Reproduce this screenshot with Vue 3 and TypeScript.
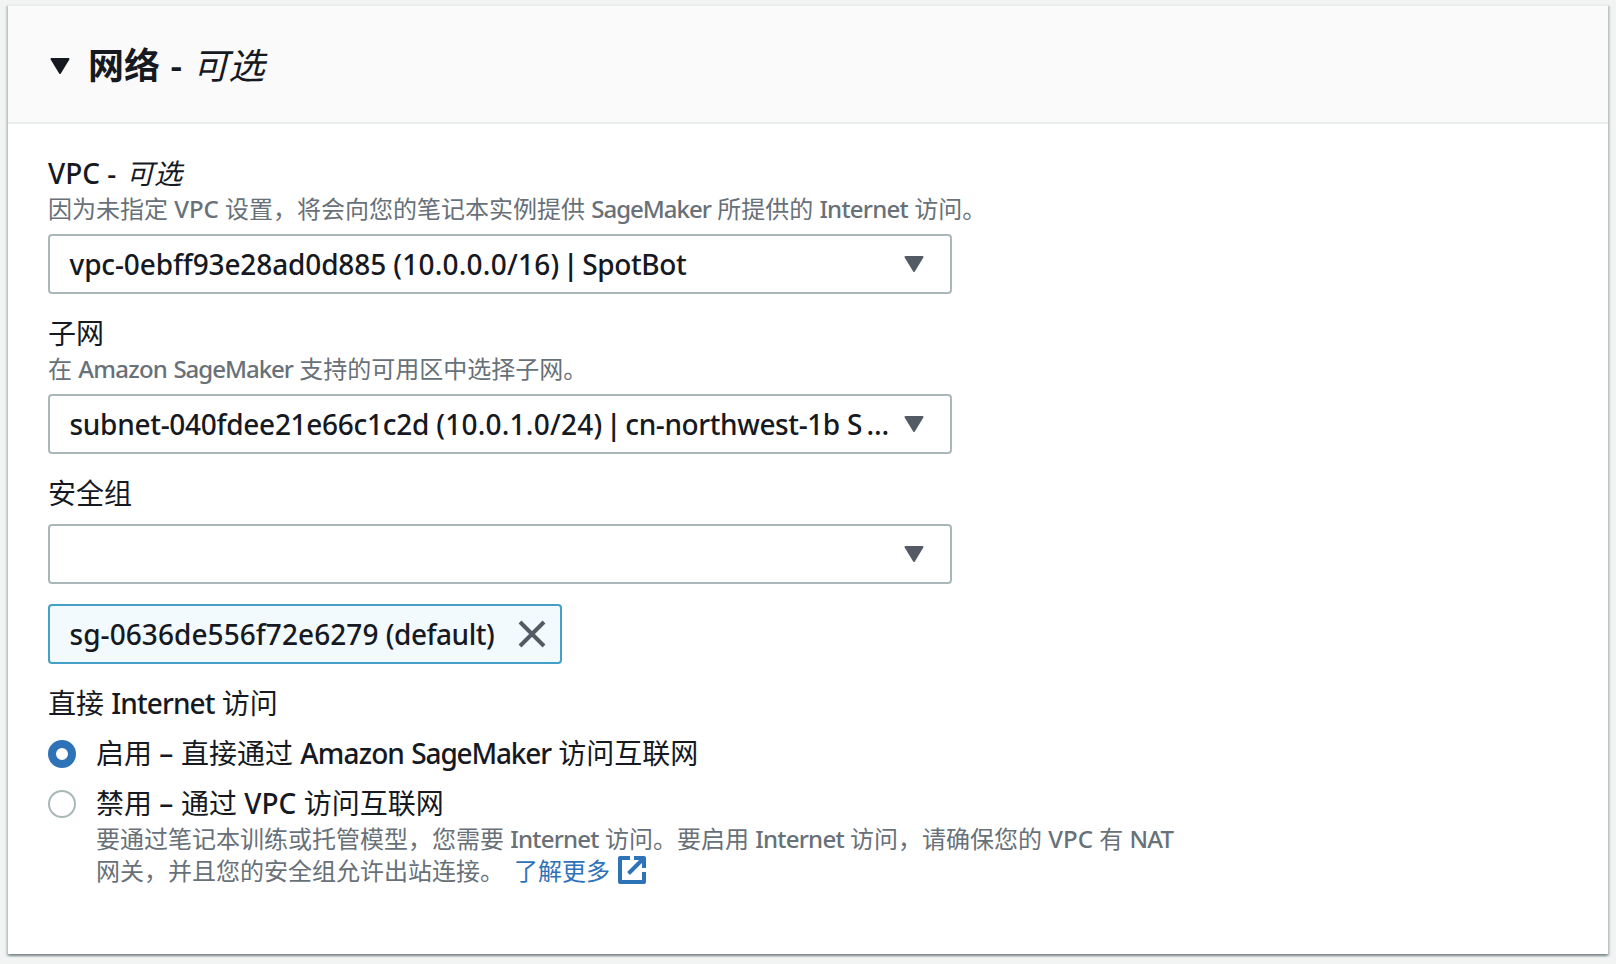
<script setup lang="ts">
import { ref } from 'vue'

interface Run {
  text: string
  latin: boolean
  tracking: string
}

// Advance width of each Latin word, in px at a 28px font size.
const advances: Record<string, number> = {
  VPC: 52,
  SageMaker: 139.5,
  Amazon: 103.7,
  Internet: 103.3,
  NAT: 51,
  '-': 11.3,
  '–': 14.5,
  'vpc-0ebff93e28ad0d885': 316.5,
  '(10.0.0.0/16)': 166,
  SpotBot: 104,
  'subnet-040fdee21e66c1c2d': 359.5,
  '(10.0.1.0/24)': 166,
  'cn-northwest-1b': 214.5,
  'S…': 46,
  'sg-0636de556f72e6279': 309,
  '(default)': 108.5,
}

const ctx = document.createElement('canvas').getContext('2d')!
ctx.font = '500 28px "Noto Sans"'

function runs(text: string): Run[] {
  return text
    .split(/([!-~–…]+)/)
    .filter((part) => part.length > 0)
    .map((part) => {
      const target = advances[part]
      if (target === undefined) return { text: part, latin: false, tracking: 'normal' }
      const spacing = (target - ctx.measureText(part).width) / part.length / 28
      return { text: part, latin: true, tracking: `${spacing.toFixed(4)}em` }
    })
}

const fields = [
  {
    label: 'VPC - ',
    optional: '可选',
    hint: '因为未指定 VPC 设置，将会向您的笔记本实例提供 SageMaker 所提供的 Internet 访问。',
    value: ['vpc-0ebff93e28ad0d885 (10.0.0.0/16)', 'SpotBot'],
  },
  {
    label: '子网',
    optional: '',
    hint: '在 Amazon SageMaker 支持的可用区中选择子网。',
    value: ['subnet-040fdee21e66c1c2d (10.0.1.0/24)', 'cn-northwest-1b S…'],
  },
  { label: '安全组', optional: '', hint: '', value: [] as string[] },
]

const access = ref('on')
const expanded = ref(true)
const groups = ref(['sg-0636de556f72e6279 (default)'])
</script>

<template>
  <section class="card" lang="zh-CN">
    <header class="head" @click="expanded = !expanded">
      <svg class="caret" viewBox="0 0 20 16"><path d="M1.500 1h17L10 15z" /></svg>
      <h2><b>网络</b><span class="dash">-</span><i>可选</i></h2>
    </header>

    <div v-if="expanded" class="body">
      <div v-for="f in fields" :key="f.label" class="field">
        <div class="label">
          <span v-for="(r, i) in runs(f.label)" :key="i" :class="{ latin: r.latin }" :style="{ letterSpacing: r.tracking }">{{ r.text }}</span><i v-if="f.optional">{{ f.optional }}</i>
        </div>
        <div v-if="f.hint" class="hint">
          <span v-for="(r, i) in runs(f.hint)" :key="i" :class="{ latin: r.latin }" :style="{ letterSpacing: r.tracking }">{{ r.text }}</span>
        </div>
        <div class="select" :class="{ plain: !f.hint }">
          <div class="value">
            <template v-for="(part, p) in f.value" :key="p">
              <span v-if="p > 0" class="bar">|</span>
              <span v-for="(r, i) in runs(part)" :key="i" :style="{ letterSpacing: r.tracking }">{{ r.text }}</span>
            </template>
          </div>
          <svg class="caret" viewBox="0 0 20 16"><path d="M1.500 1h17L10 15z" /></svg>
        </div>
      </div>

      <div v-for="g in groups" :key="g" class="tag">
        <div class="value">
          <span v-for="(r, i) in runs(g)" :key="i" :style="{ letterSpacing: r.tracking }">{{ r.text }}</span>
        </div>
        <svg class="close" viewBox="0 0 28 28" @click="groups = []"><path d="M2 2l24 24M26 2L2 26" /></svg>
      </div>

      <div class="label">
        <span v-for="(r, i) in runs('直接 Internet 访问')" :key="i" :class="{ latin: r.latin }" :style="{ letterSpacing: r.tracking }">{{ r.text }}</span>
      </div>
      <div class="options">
        <div class="option" @click="access = 'on'">
          <span class="radio" :class="{ on: access === 'on' }"></span>
          <div class="label">
            <span v-for="(r, i) in runs('启用 – 直接通过 Amazon SageMaker 访问互联网')" :key="i" :class="{ latin: r.latin }" :style="{ letterSpacing: r.tracking }">{{ r.text }}</span>
          </div>
        </div>
        <div class="option" @click="access = 'off'">
          <span class="radio" :class="{ on: access === 'off' }"></span>
          <div>
            <div class="label">
              <span v-for="(r, i) in runs('禁用 – 通过 VPC 访问互联网')" :key="i" :class="{ latin: r.latin }" :style="{ letterSpacing: r.tracking }">{{ r.text }}</span>
            </div>
            <div class="hint">
              <span v-for="(r, i) in runs('要通过笔记本训练或托管模型，您需要 Internet 访问。要启用 Internet 访问，请确保您的 VPC 有 NAT')" :key="i" :class="{ latin: r.latin }" :style="{ letterSpacing: r.tracking }">{{ r.text }}</span>
            </div>
            <div class="hint">
              <span>网关，并且您的安全组允许出站连接。</span>
              <a class="link">了解更多<svg class="external" viewBox="0 0 28 28"><path d="M12 2H2v24h24V16" /><path d="M16 2h10v10M25 3L10.500 17.500" /></svg></a>
            </div>
          </div>
        </div>
      </div>
    </div>
  </section>
</template>

<style>
body {
  background: #f2f3f3;
}
</style>

<style scoped>
.card {
  box-sizing: border-box;
  width: 1600px;
  height: 950px;
  margin: 4px 8px 10px;
  border-top: 2px solid #eaeded;
  background: #fff;
  box-shadow:
    0 2px 2px 0 rgba(0, 28, 36, 0.3),
    2px 2px 2px 0 rgba(0, 28, 36, 0.15),
    -2px 2px 2px 0 rgba(0, 28, 36, 0.15);
  color: #16191f;
  font-family: 'Noto Sans', 'Noto Sans CJK SC', sans-serif;
  font-size: 28px;
  font-weight: 400;
  line-height: 38px;
  white-space: pre;
  display: flow-root;
}
.head {
  box-sizing: border-box;
  height: 118px;
  padding: 3px 42px 0;
  display: flex;
  align-items: center;
  border-bottom: 2px solid #eaeded;
  background: #fafafa;
}
h2 {
  margin: 0 0 0 18px;
  font-size: 36px;
  font-weight: 400;
  line-height: 44px;
}
h2 b {
  font-weight: 700;
}
.dash {
  display: inline-block;
  width: 32.5px;
  text-align: center;
  font-weight: 600;
}
.caret {
  flex: none;
  width: 20px;
  height: 16px;
  fill: #16191f;
  stroke: #16191f;
  stroke-width: 2;
  stroke-linejoin: round;
}
.body {
  padding: 30px 40px;
}
.field {
  margin-bottom: 20px;
}
.label,
.hint,
.value {
  display: flex;
}
.latin,
.value {
  font-weight: 500;
}
.value {
  line-height: 40px;
}
.label {
  height: 40px;
}
.hint {
  height: 32px;
  color: #687078;
  font-size: 24px;
  line-height: 30px;
}
.select {
  box-sizing: border-box;
  width: 904px;
  height: 60px;
  margin-top: 8px;
  padding: 0 26px 0 19.5px;
  display: flex;
  align-items: center;
  justify-content: space-between;
  border: 2px solid #aab7b8;
  border-radius: 4px;
}
.select.plain {
  margin-top: 10px;
}
.select .caret {
  fill: #545b64;
  stroke: #545b64;
}
.bar {
  width: 23px;
  display: flex;
  justify-content: center;
  font-weight: 600;
}
.tag {
  box-sizing: border-box;
  width: 514px;
  height: 60px;
  margin-bottom: 20px;
  padding: 0 14px 0 19.5px;
  display: flex;
  align-items: center;
  justify-content: space-between;
  border: 2px solid #44a0c7;
  border-radius: 4px;
  background: #f2fafd;
}
.close {
  width: 28px;
  height: 28px;
  fill: none;
  stroke: #545b64;
  stroke-width: 4;
}
.options {
  margin-top: 10px;
  display: flex;
  flex-direction: column;
  gap: 10px;
}
.option {
  display: flex;
  gap: 20px;
}
.radio {
  box-sizing: border-box;
  flex: none;
  width: 28px;
  height: 28px;
  margin-top: 6px;
  border: 2px solid #aab7b8;
  border-radius: 50%;
  background: #fff;
}
.radio.on {
  border: 8px solid #2e73b8;
}
.link {
  margin-left: 10px;
  display: flex;
  gap: 8px;
  color: #2e73b8;
}
.external {
  width: 28px;
  height: 28px;
  fill: none;
  stroke: #2e73b8;
  stroke-width: 4;
  stroke-linejoin: round;
}
</style>
